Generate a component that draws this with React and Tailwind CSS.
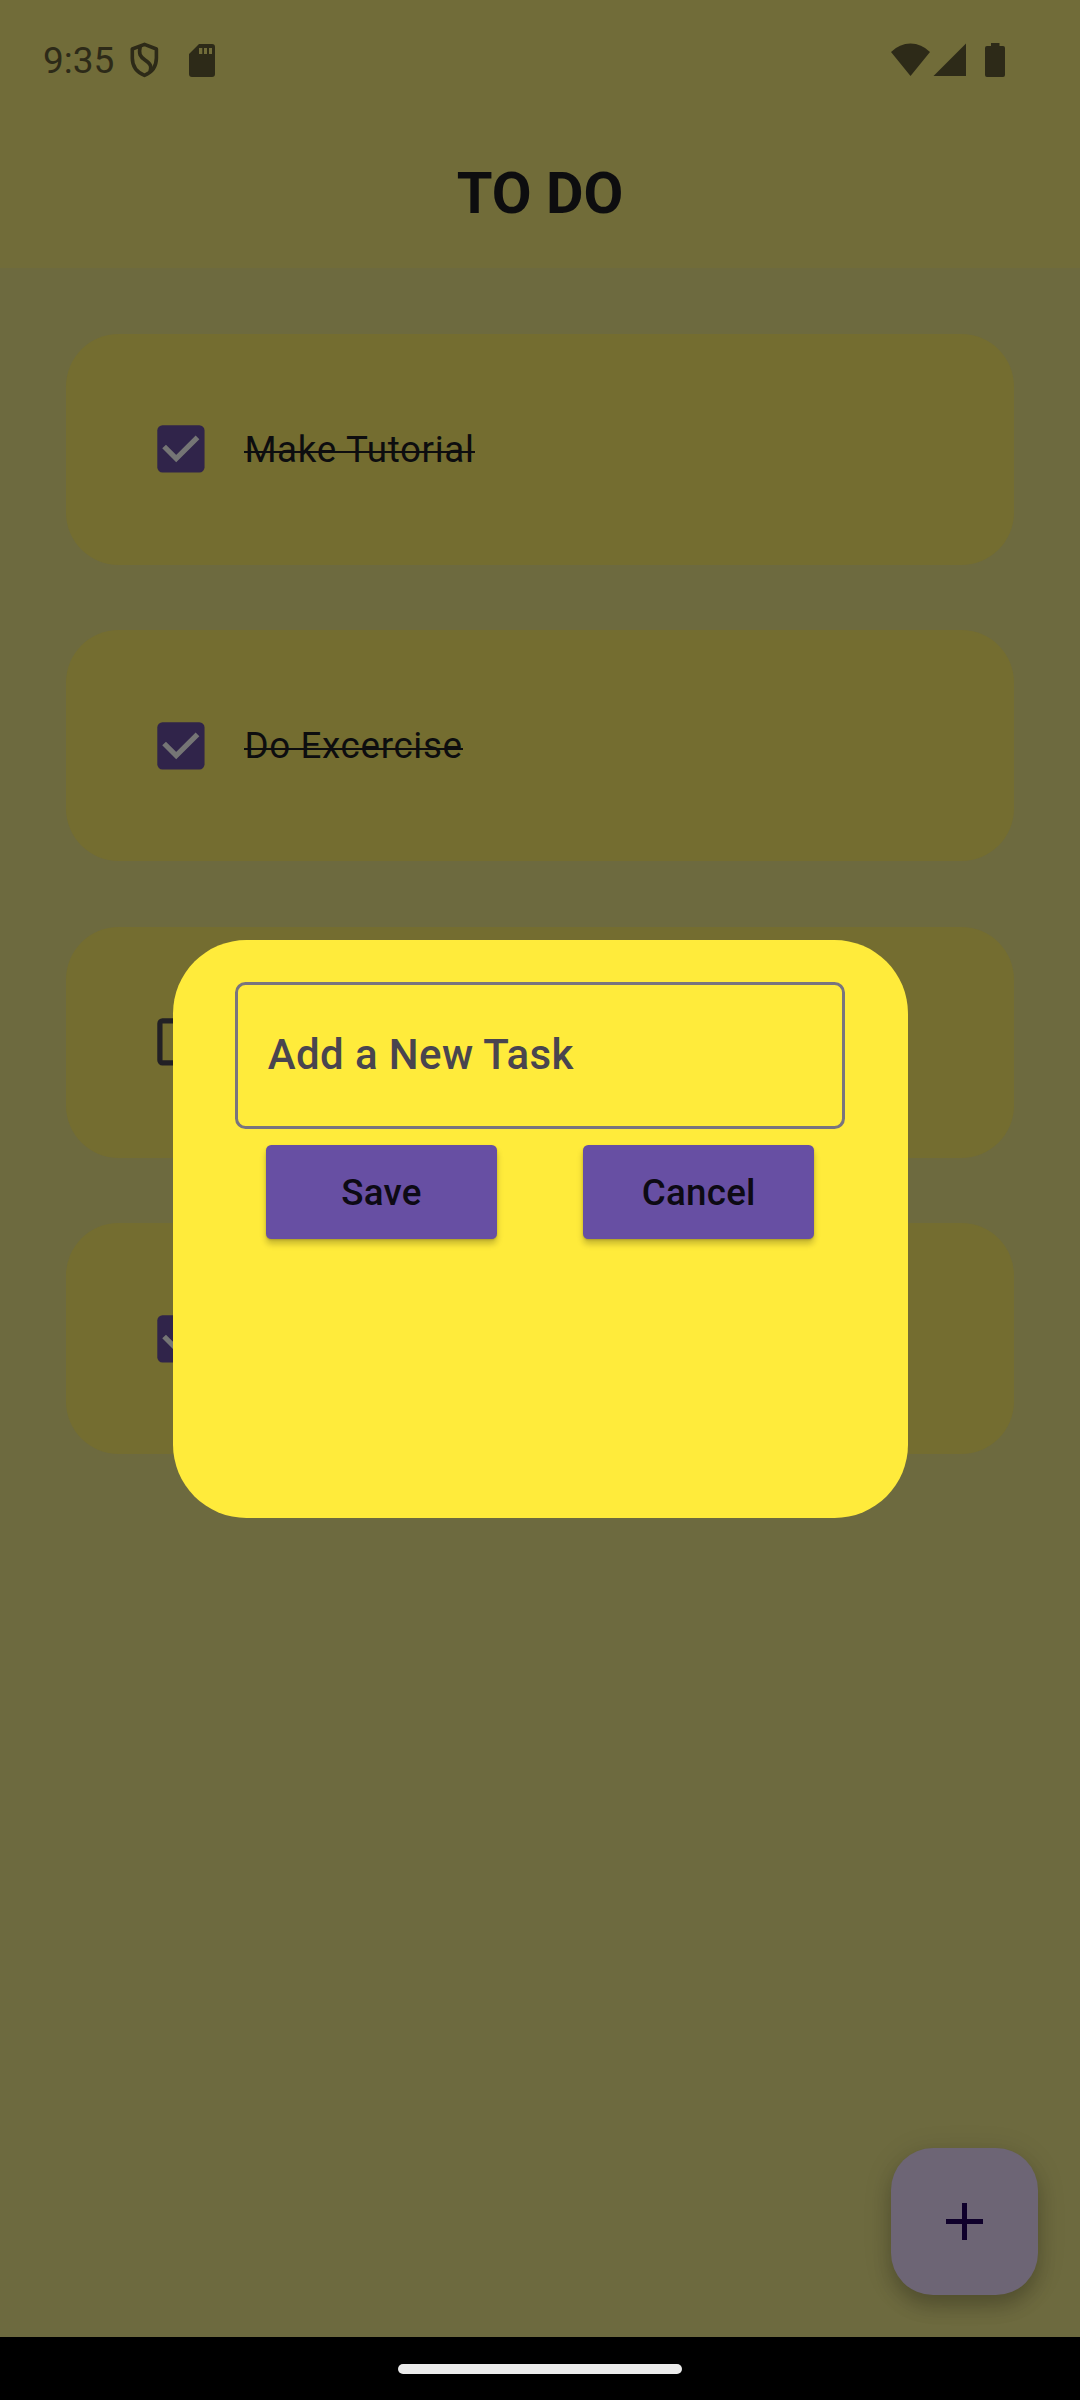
const tasks = [
  { id: 1, name: "Make Tutorial", done: true },
  { id: 2, name: "Do Excercise", done: true },
  { id: 3, name: "", done: false },
  { id: 4, name: "", done: true },
];

function Checkbox({ done }) {
  return (
    <svg className="size-[48px] shrink-0" viewBox="0 0 48 48" fill="none">
      {done ? (
        <>
          <rect x="0.3" y="0.3" width="47.25" height="47.25" rx="5.25" fill="#30244a" />
          <path d="M7.1 21.5 L19.2 33.6 L40.5 12.3" stroke="#757575" strokeWidth="5.25" />
        </>
      ) : (
        <rect x="2.9" y="2.9" width="42" height="42" rx="2.6" stroke="#222025" strokeWidth="5.25" />
      )}
    </svg>
  );
}

function Task({ name, done }) {
  return (
    <div className="flex h-[231px] shrink-0 items-center rounded-[52.5px] bg-[#746d30] pl-[91.4px]">
      <Checkbox done={done} />
      {name && (
        <span className="relative ml-[39.4px] text-[36.75px] tracking-[0.656px] text-[#0d0d0f] after:absolute after:top-[calc(50%+2px)] after:left-0 after:h-[2px] after:w-full after:bg-[#0d0d0f]">
          {name}
        </span>
      )}
    </div>
  );
}

function StatusBar() {
  return (
    <div className="flex h-[120px] items-center pl-[43px] text-[#2d2a18]">
      <span className="w-[73px] whitespace-nowrap text-[37px] leading-none">9:35</span>
      <svg className="ml-[13px] h-[36px] w-[31px]" viewBox="0 0 31 36" fill="none" stroke="currentColor" strokeWidth="3.6">
        <path d="M15.5 2.4 L27.4 7 V16 C27.4 24.5 22.5 30.5 15.5 33.4 C8.5 30.5 3.3 24.5 3.3 16 V7 Z" strokeLinejoin="round" />
        <path d="M11.2 4.500 C9.500 12 11 14.500 16 18 C21.500 21.800 23 24 21 30" />
      </svg>
      <svg className="ml-[29px] h-[33px] w-[26px]" viewBox="0 0 26 33" fill="currentColor">
        <path fillRule="evenodd" d="M10 0 H23 Q26 0 26 3 V30 Q26 33 23 33 H3 Q0 33 0 30 V10 Z M10 4 V10 H13.300 V4 Z M15 4 V10 H18 V4 Z M20 4 V10 H23 V4 Z" />
      </svg>
      <svg className="ml-auto h-[34px] w-[39px]" viewBox="0 0 39 34" fill="currentColor">
        <path d="M0 9 Q8.500 0.500 19.500 0.500 Q30.500 0.500 39 9 L19.500 33 Z" />
      </svg>
      <svg className="ml-[3px] h-[34px] w-[33px]" viewBox="0 0 33 34" fill="currentColor">
        <path d="M33 0.500 V33 H0.500 Z" />
      </svg>
      <svg className="mr-[75px] ml-[19px] h-[34px] w-[20px]" viewBox="0 0 20 34" fill="currentColor">
        <path d="M6 0 H14.500 V3 H18 Q20 3 20 5 V32 Q20 34 18 34 H2 Q0 34 0 32 V5 Q0 3 2 3 H6 Z" />
      </svg>
    </div>
  );
}

function DialogButton({ children }) {
  return (
    <button className="h-[94.5px] w-[231px] rounded-[5.25px] bg-[#674fa3] text-[36.75px] font-medium tracking-[0.26px] text-[#0d0a14] shadow-[0_5px_6px_rgba(0,0,0,0.22),0_1px_2px_rgba(0,0,0,0.15)]">
      {children}
    </button>
  );
}

function TaskDialog() {
  return (
    <div className="absolute top-[940.3px] left-[172.6px] flex h-[577.5px] w-[735px] flex-col rounded-[73.5px] bg-[#ffeb3b] px-[62.8px] pt-[41.8px]">
      <div className="flex h-[147px] items-center rounded-[10.5px] border-[3px] border-[#79747e] pb-[2px] pl-[29.4px]">
        <span className="text-[42px] font-medium tracking-[0.39px] text-[#49454f]">Add a New Task</span>
      </div>
      <div className="mt-[15.8px] flex justify-between px-[30.6px]">
        <DialogButton>Save</DialogButton>
        <DialogButton>Cancel</DialogButton>
      </div>
    </div>
  );
}

export default function App() {
  return (
    <div className="relative flex h-[2400px] w-[1080px] flex-col overflow-hidden bg-[#6d6a3f] [font-family:Roboto,sans-serif]">
      <header className="h-[268px] shrink-0 bg-[#716c39]">
        <StatusBar />
        <h1 className="pt-[39px] text-center text-[57.75px] leading-[68px] font-bold text-[#0d0d0f]">TO DO</h1>
      </header>
      <main className="flex flex-1 flex-col gap-[65.6px] px-[65.6px] pt-[65.7px]">
        {tasks.map((t) => (
          <Task key={t.id} {...t} />
        ))}
      </main>
      <button className="absolute top-[2148px] left-[891px] flex size-[147px] items-center justify-center rounded-[42px] bg-[#6d6575] shadow-[0_12px_18px_rgba(0,0,0,0.18),0_4px_30px_rgba(0,0,0,0.12)]">
        <svg className="size-[37px]" viewBox="0 0 37 37" fill="#0f002b">
          <path d="M16 0 H21 V16 H37 V21 H21 V37 H16 V21 H0 V16 H16 Z" />
        </svg>
      </button>
      <footer className="z-10 flex h-[63px] shrink-0 justify-center bg-black pt-[27px]">
        <div className="h-[10px] w-[284px] rounded-full bg-[#ebebeb]" />
      </footer>
      <TaskDialog />
    </div>
  );
}
